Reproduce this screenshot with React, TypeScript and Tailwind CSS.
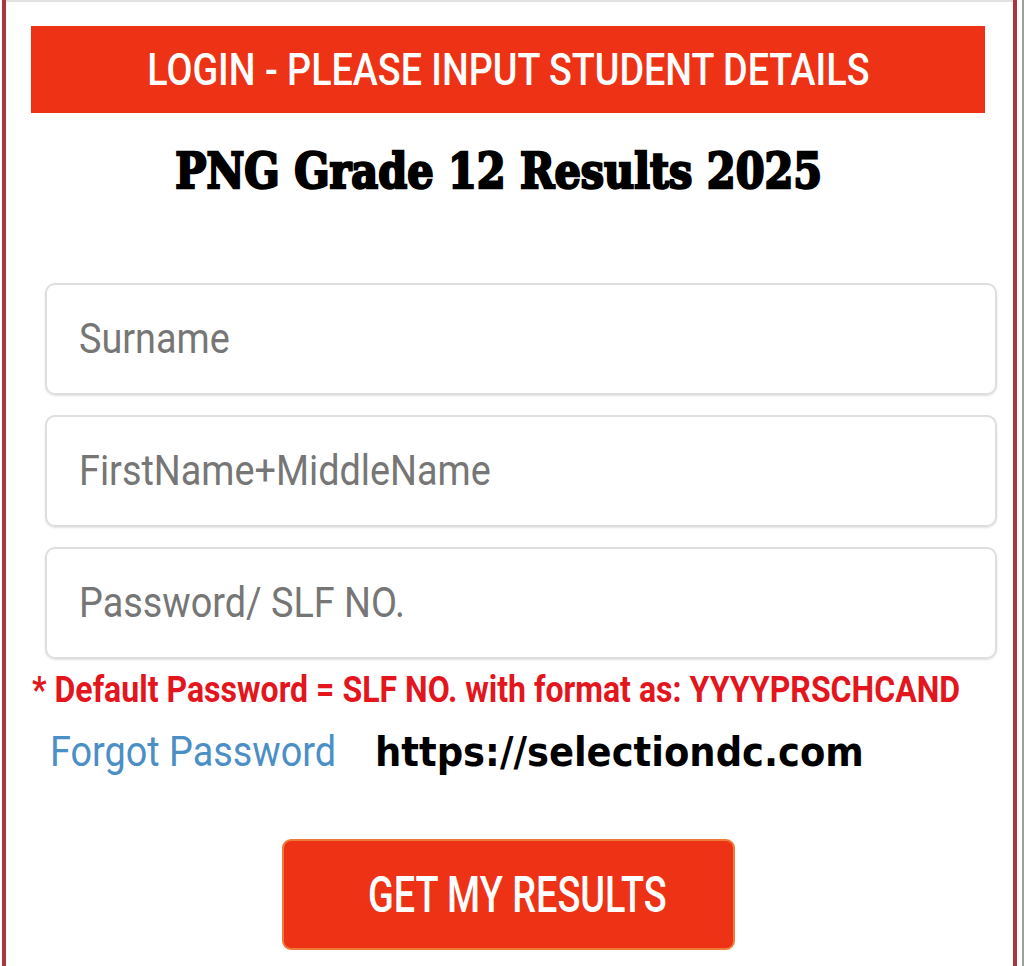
import React from "react";

export default function App() {
  return (
    <div className="w-[1024px] h-[966px] bg-white flex overflow-hidden" style={{ fontFamily: "Roboto, 'Liberation Sans', sans-serif" }}>
      <div className="w-[2px] shrink-0" />
      <div className="w-[4px] shrink-0 bg-[#a8383b]" />
      <div className="flex-1 min-w-0 flex flex-col border-t-2 border-[#e2e2e2]">
        <div className="mt-[24px] ml-[25px] mr-[28px] h-[87px] bg-[#ee3216] flex items-center justify-center">
          <span className="inline-block text-white text-[44px] font-medium leading-none scale-x-[0.857] whitespace-nowrap">
            LOGIN - PLEASE INPUT STUDENT DETAILS
          </span>
        </div>
        <div className="mt-[34px] flex justify-center ml-[-21px]">
          <span
            className="inline-block text-black text-[48px] font-bold leading-none scale-x-[0.863] whitespace-nowrap [-webkit-text-stroke:2.5px_black]"
            style={{ fontFamily: "'DejaVu Serif', serif" }}
          >
            PNG Grade 12 Results 2025
          </span>
        </div>
        <div className="mt-[88px] ml-[39px] mr-[16px] flex flex-col gap-[20px]">
          {["Surname", "FirstName+MiddleName", "Password/ SLF NO."].map((p) => (
            <div
              key={p}
              className="h-[112px] rounded-[10px] border-2 border-[#dedede] shadow-[0_1px_2px_rgba(0,0,0,0.12)] flex items-center pl-[32px]"
            >
              <span className="inline-block origin-left scale-x-[0.9] text-[42px] text-[#767676] leading-none whitespace-nowrap">
                {p}
              </span>
            </div>
          ))}
        </div>
        <div className="mt-[13px] ml-[26px] flex">
          <span className="inline-block shrink-0 origin-left scale-x-[0.89] text-[36px] font-bold text-[#e3161d] leading-none whitespace-nowrap">
            * Default Password = SLF NO. with format as: YYYYPRSCHCAND
          </span>
        </div>
        <div className="mt-[23px] ml-[44px] flex items-center">
          <span className="inline-block shrink-0 origin-left scale-x-[0.9] text-[42px] text-[#4b8fc6] leading-none whitespace-nowrap w-[325px]">
            Forgot Password
          </span>
          <span
            className="inline-block shrink-0 origin-left scale-x-[0.924] text-[40px] font-bold text-black leading-none whitespace-nowrap"
            style={{ fontFamily: "'DejaVu Sans', sans-serif" }}
          >
            https://selectiondc.com
          </span>
        </div>
        <div className="mt-[66px] ml-[276px] w-[453px] h-[111px] rounded-[9px] bg-[#ee3216] border-2 border-[#f07a3a] flex items-center justify-center pl-[18px]">
          <span className="inline-block scale-x-[0.757] text-[50px] font-medium text-white leading-none whitespace-nowrap">
            GET MY RESULTS
          </span>
        </div>
      </div>
      <div className="w-[4px] shrink-0 bg-[#a8383b]" />
      <div className="w-[5px] shrink-0" />
      <div className="w-[2px] shrink-0 bg-[#9aa29a]" />
    </div>
  );
}
